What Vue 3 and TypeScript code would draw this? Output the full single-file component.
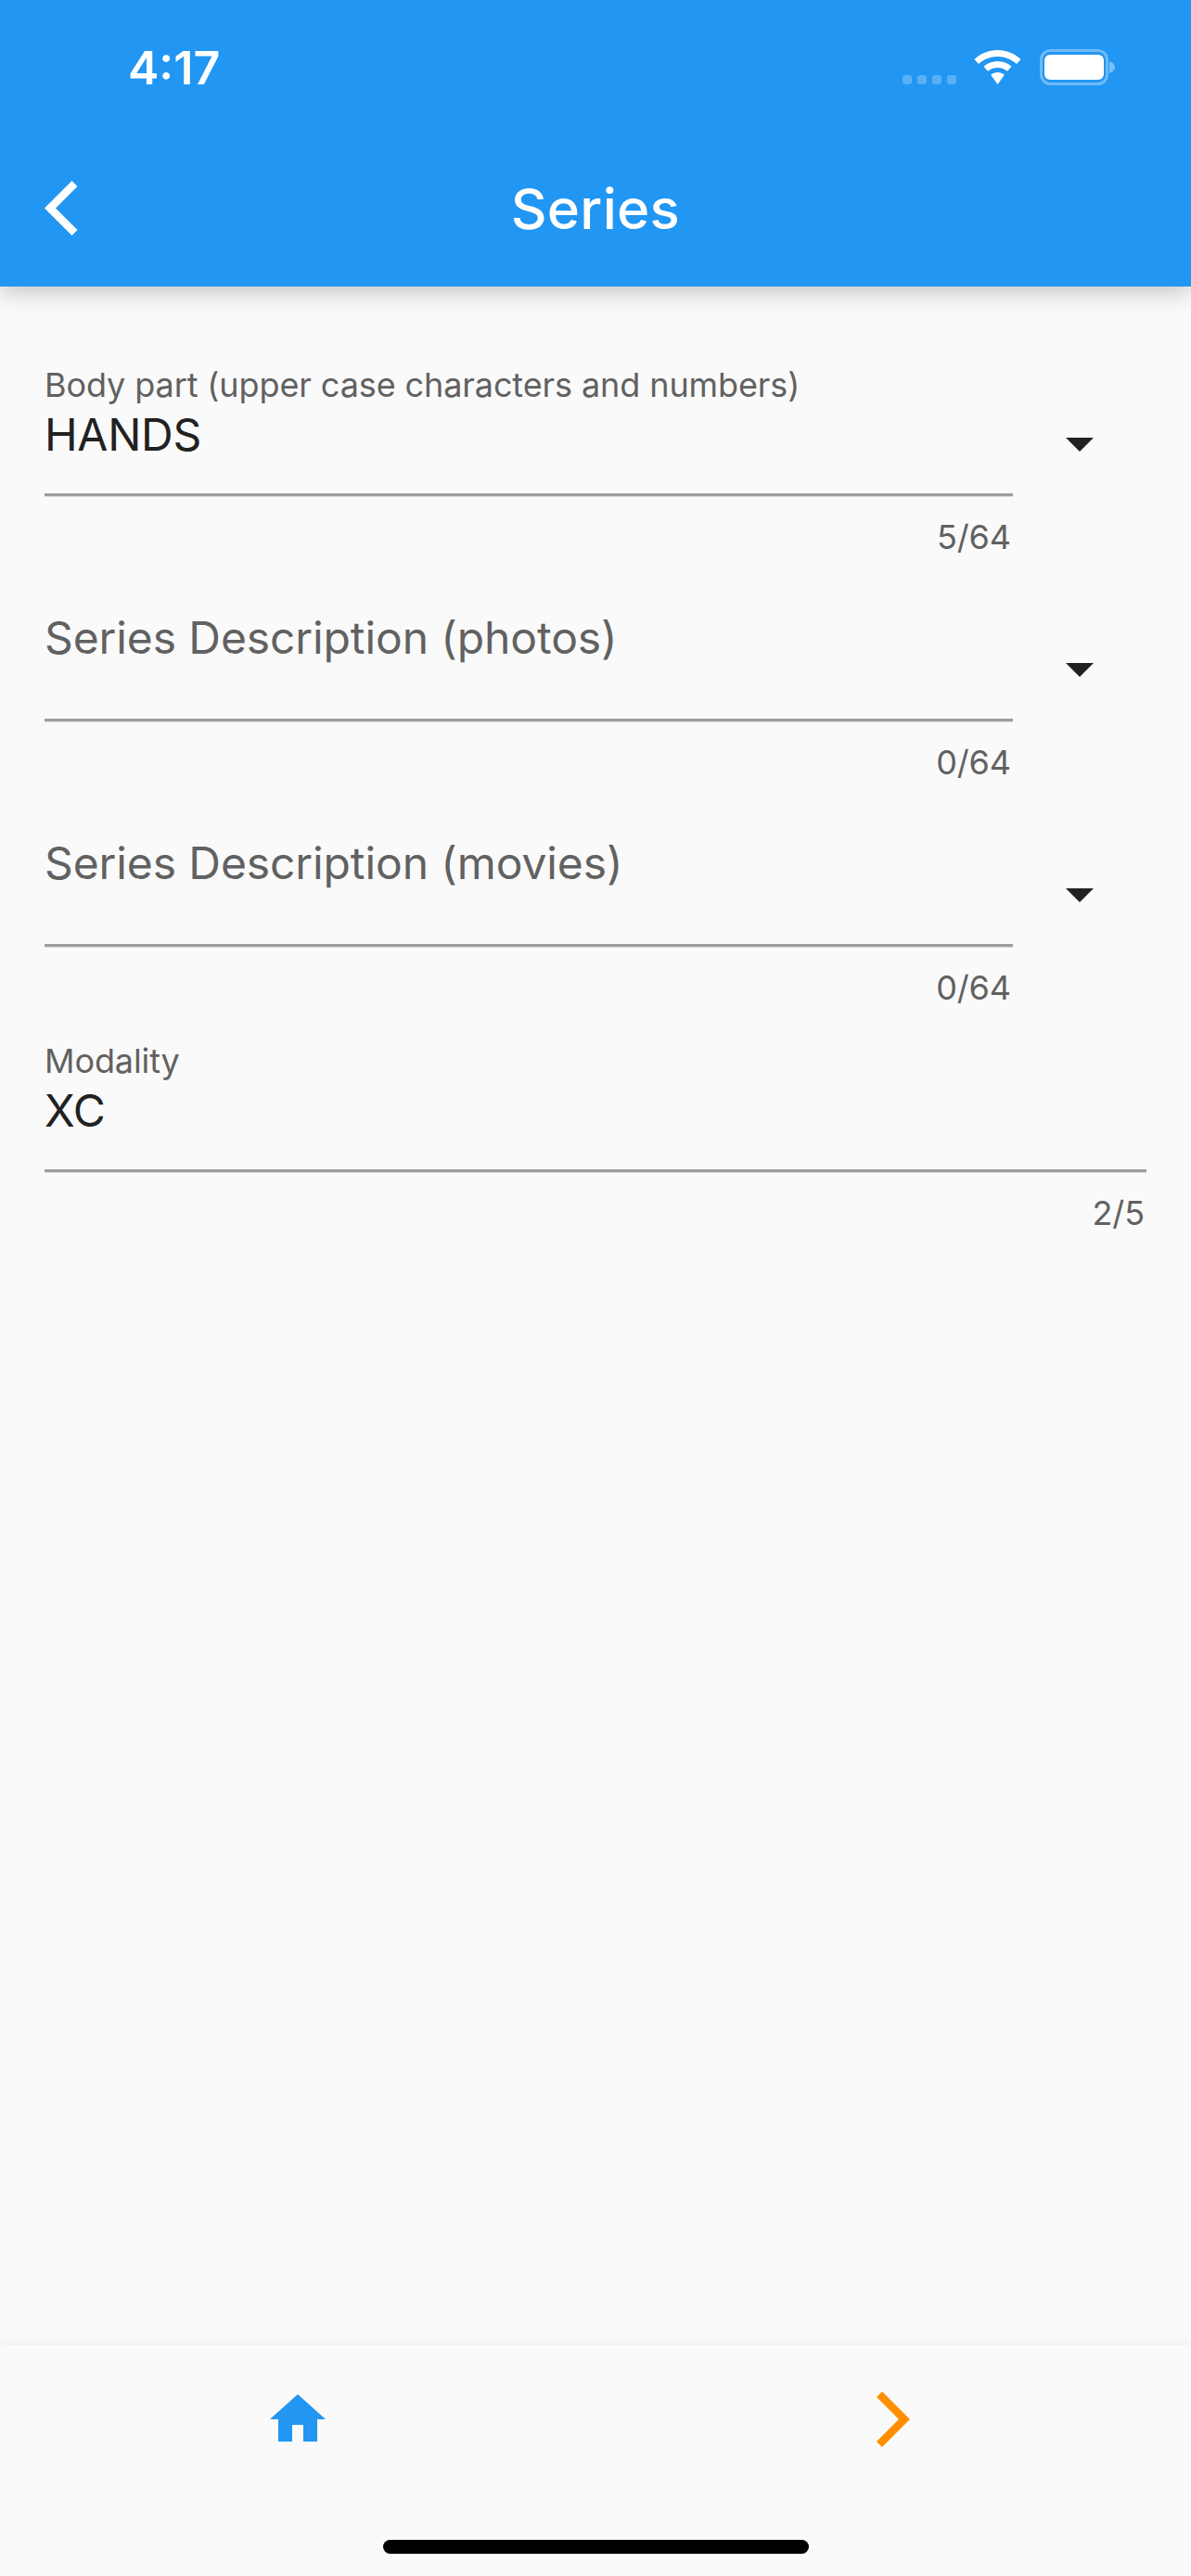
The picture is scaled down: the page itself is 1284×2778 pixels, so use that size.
<script setup lang="ts">
interface Field {
  label: string
  value?: string
  counter: string
  dropdown: boolean
}

const fields: Field[] = [
  { label: 'Body part (upper case characters and numbers)', value: 'HANDS', counter: '5/64', dropdown: true },
  { label: 'Series Description (photos)', counter: '0/64', dropdown: true },
  { label: 'Series Description (movies)', counter: '0/64', dropdown: true },
  { label: 'Modality', value: 'XC', counter: '2/5', dropdown: false }
]
</script>

<template>
  <div class="screen">
    <header class="app-bar">
      <div class="status-bar">
        <span class="time">4:17</span>
        <svg class="status-icons" width="128" height="40" viewBox="0 0 128 40">
          <g fill="#fff" fill-opacity="0.25">
            <rect x="0" y="28" width="10" height="10" rx="3" />
            <rect x="16" y="28" width="10" height="10" rx="3" />
            <rect x="32" y="28" width="10" height="10" rx="3" />
            <rect x="48" y="28" width="10" height="10" rx="3" />
          </g>
          <g fill="#fff" transform="translate(25.500 0)">
            <path d="M77 1c9.500 0 18.500 3.700 25 10l-4.500 5C92 11 85 8 77 8S62 11 56.500 16L52 11C58.500 4.700 67.500 1 77 1z" />
            <path d="M77 13c5.800 0 11 2.200 15 5.800l-4.500 5C84.700 21.400 81 20 77 20s-7.700 1.400-10.500 3.800l-4.500-5C66 15.200 71.200 13 77 13z" />
            <path d="M77 25c2.800 0 5.300 1 7.300 2.700L77 38l-7.300-10.300C71.700 26 74.200 25 77 25z" />
          </g>
        </svg>
        <svg class="battery" width="81" height="40" viewBox="0 0 81 40">
          <rect x="1.500" y="1.500" width="71" height="36" rx="10" fill="none" stroke="#fff" stroke-opacity="0.35" stroke-width="3" />
          <rect x="5" y="6" width="64" height="27" rx="6" fill="#fff" />
          <path fill="#fff" fill-opacity="0.4" d="M75 13c3 1 6 3.500 6 6.500S78 25 75 26z" />
        </svg>
      </div>
      <div class="toolbar">
        <svg class="back" width="36" height="59" viewBox="0 0 36 59">
          <path fill="#fff" d="M0 29.500L29.500 0l6 6L12 29.500 35.500 53l-6 6z" />
        </svg>
        <h1 class="title">Series</h1>
      </div>
    </header>

    <main class="form">
      <div v-for="field in fields" :key="field.label" class="row">
        <div class="input" :class="{ filled: field.value }">
          <div class="control">
            <template v-if="field.value">
              <div class="label">{{ field.label }}</div>
              <div class="value">{{ field.value }}</div>
            </template>
            <div v-else class="hint">{{ field.label }}</div>
          </div>
          <div class="counter">{{ field.counter }}</div>
        </div>
        <svg v-if="field.dropdown" class="arrow" width="72" height="72" viewBox="0 0 24 24">
          <path fill="#212121" d="M7 10l5 5 5-5z" />
        </svg>
      </div>
    </main>

    <footer class="bottom-bar">
      <div class="actions">
        <div class="action">
          <svg width="72" height="72" viewBox="0 0 24 24">
            <path fill="#2196f3" d="M10 20v-6h4v6h5v-8h3L12 3 2 12h3v8z" />
          </svg>
        </div>
        <div class="action">
          <svg width="36" height="60" viewBox="0 0 36 60">
            <path fill="#ff8f00" d="M6 0l30 30-30 30-6-6 24-24L0 6z" />
          </svg>
        </div>
      </div>
      <div class="home-indicator"></div>
    </footer>
  </div>
</template>

<style>
html,
body {
  margin: 0;
  background: #fafafa;
}
</style>

<style scoped>
.screen {
  width: 1284px;
  height: 2778px;
  display: flex;
  flex-direction: column;
  overflow: hidden;
  background: #fafafa;
  font-family: Inter, Roboto, "Liberation Sans", sans-serif;
  letter-spacing: -0.1px;
}

.app-bar {
  height: 309px;
  flex: none;
  background: #2196f3;
  box-shadow: 0 6px 24px rgba(0, 0, 0, 0.22);
  position: relative;
  color: #fff;
}

.status-bar {
  height: 141px;
  display: flex;
  align-items: flex-start;
  padding: 53px 82px 0 138px;
  box-sizing: border-box;
}

.time {
  font-size: 50px;
  line-height: 40px;
  font-weight: 600;
  letter-spacing: 0;
  flex: 1;
}

.status-icons {
  margin-right: 20px;
}

.toolbar {
  height: 168px;
  display: flex;
  align-items: center;
  justify-content: center;
  position: relative;
}

.back {
  position: absolute;
  left: 48px;
  top: 54px;
}

.title {
  margin: 0;
  font-size: 60px;
  font-weight: 500;
  letter-spacing: 0.3px;
}

.form {
  flex: 1;
  padding: 85px 48px 0;
}

.row {
  height: 243px;
  display: flex;
  align-items: flex-start;
}

.input {
  flex: 1;
  min-width: 0;
}

.control {
  height: 141px;
  box-sizing: border-box;
  border-bottom: 3px solid #9e9e9e;
  box-shadow: 0 1px 0 #dcdcdc;
}

.label {
  font-size: 36px;
  line-height: 42px;
  color: #616161;
}

.value {
  font-size: 48px;
  line-height: 56px;
  margin-top: 5px;
  letter-spacing: -0.3px;
  color: #212121;
}

.hint {
  padding-top: 23px;
  font-size: 48px;
  line-height: 56px;
  color: #616161;
}

.counter {
  margin-top: 23px;
  text-align: right;
  font-size: 36px;
  line-height: 42px;
  padding-right: 2px;
  color: #616161;
}

.arrow {
  flex: none;
  margin-left: 36px;
  margin-top: 48px;
  margin-right: 36px;
}

.bottom-bar {
  flex: none;
  height: 249px;
  position: relative;
  box-sizing: border-box;
  box-shadow: 0 -3px 9px rgba(0, 0, 0, 0.04);
  background: #fafafa;
}

.actions {
  display: grid;
  grid-template-columns: 1fr 1fr;
  height: 160px;
}

.action {
  display: flex;
  align-items: center;
  justify-content: center;
}

.home-indicator {
  width: 459px;
  height: 15px;
  margin: 50px auto 0;
  border-radius: 8px;
  background: #000;
}
</style>
